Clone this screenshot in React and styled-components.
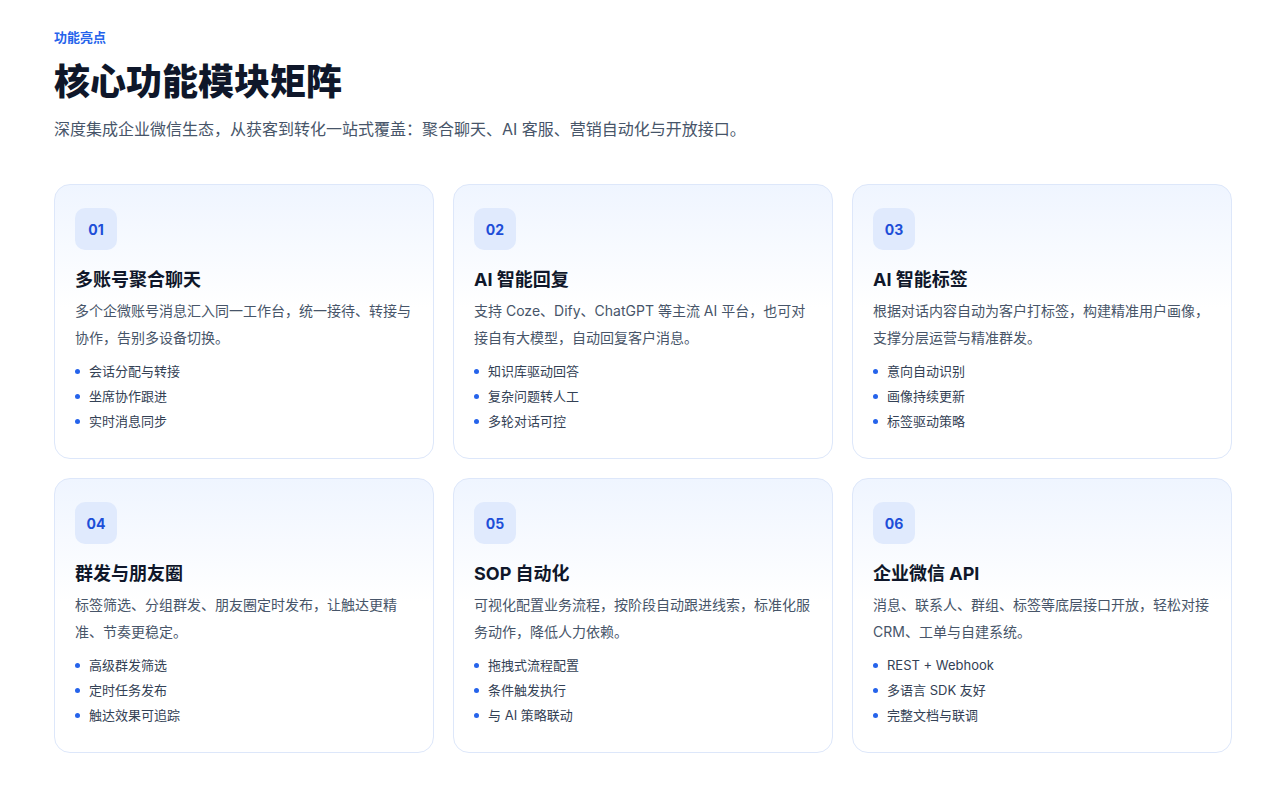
import React from "react";
import styled, { createGlobalStyle } from "styled-components";

const Global = createGlobalStyle`
  body { margin: 0; background: #fff; font-family: Inter, "Noto Sans CJK SC", sans-serif; }
`;
const Page = styled.div`padding: 28px 0 0 54px; width: 1178px;`;
const Eyebrow = styled.div`font-size: 13px; font-weight: 600; color: #2563eb; line-height: 18px;`;
const Title = styled.h1`margin: 12px 0 0; font-size: 36px; font-weight: 800; color: #0f172a; line-height: 48px;`;
const Sub = styled.p`margin: 10px 0 0; font-size: 16px; color: #475569; line-height: 26px;`;
const Grid = styled.div`margin-top: 42px; display: grid; grid-template-columns: repeat(3, 380px); gap: 19px;`;
const Card = styled.div`
  height: 275px; box-sizing: border-box; border: 1px solid #dde7fa; border-radius: 16px;
  background: linear-gradient(180deg, #eff5ff 0%, #ffffff 45%); padding: 23px 20px 20px;
`;
const Badge = styled.div`
  width: 42px; height: 42px; border-radius: 10px; background: #e0eafd; color: #1d4ed8;
  font-size: 14px; font-weight: 700; display: flex; align-items: center; justify-content: center;
`;
const CardTitle = styled.h3`margin: 17px 0 0; font-size: 18px; font-weight: 700; color: #0f172a; line-height: 26px;`;
const Desc = styled.p`margin: 4px 0 0; font-size: 14px; color: #475569; line-height: 27px;`;
const List = styled.ul`margin: 8px 0 0; padding: 0; list-style: none;`;
const Item = styled.li`
  font-size: 13px; color: #334155; line-height: 25px; display: flex; align-items: center; gap: 9px;
  &::before { content: ""; width: 5px; height: 5px; border-radius: 50%; background: #2563eb; }
`;

const cards = [
  ["01", "多账号聚合聊天", "多个企微账号消息汇入同一工作台，统一接待、转接与协作，告别多设备切换。", ["会话分配与转接", "坐席协作跟进", "实时消息同步"]],
  ["02", "AI 智能回复", "支持 Coze、Dify、ChatGPT 等主流 AI 平台，也可对接自有大模型，自动回复客户消息。", ["知识库驱动回答", "复杂问题转人工", "多轮对话可控"]],
  ["03", "AI 智能标签", "根据对话内容自动为客户打标签，构建精准用户画像，支撑分层运营与精准群发。", ["意向自动识别", "画像持续更新", "标签驱动策略"]],
  ["04", "群发与朋友圈", "标签筛选、分组群发、朋友圈定时发布，让触达更精准、节奏更稳定。", ["高级群发筛选", "定时任务发布", "触达效果可追踪"]],
  ["05", "SOP 自动化", "可视化配置业务流程，按阶段自动跟进线索，标准化服务动作，降低人力依赖。", ["拖拽式流程配置", "条件触发执行", "与 AI 策略联动"]],
  ["06", "企业微信 API", "消息、联系人、群组、标签等底层接口开放，轻松对接 CRM、工单与自建系统。", ["REST + Webhook", "多语言 SDK 友好", "完整文档与联调"]],
];

export default function App() {
  return (
    <Page>
      <Global />
      <Eyebrow>功能亮点</Eyebrow>
      <Title>核心功能模块矩阵</Title>
      <Sub>深度集成企业微信生态，从获客到转化一站式覆盖：聚合聊天、AI 客服、营销自动化与开放接口。</Sub>
      <Grid>
        {cards.map(([n, t, d, items]) => (
          <Card key={n}>
            <Badge>{n}</Badge>
            <CardTitle>{t}</CardTitle>
            <Desc>{d}</Desc>
            <List>{items.map((i) => <Item key={i}>{i}</Item>)}</List>
          </Card>
        ))}
      </Grid>
    </Page>
  );
}
